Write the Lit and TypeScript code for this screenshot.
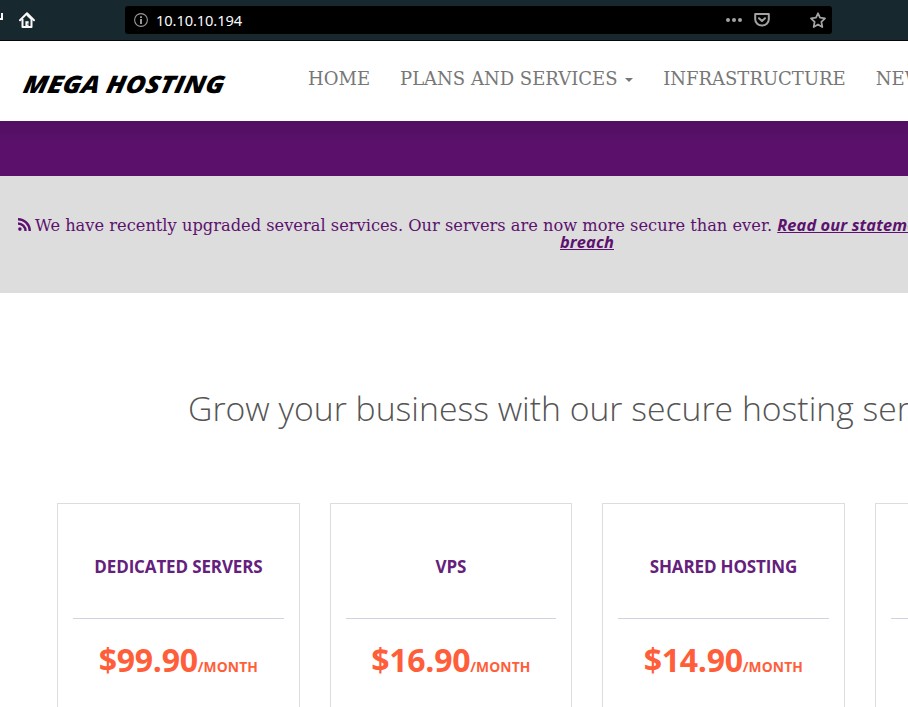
import { LitElement, html, css, svg } from "lit";
import { customElement } from "lit/decorators.js";

interface Plan {
  name: string;
  price: string;
}

const PLANS: Plan[] = [
  { name: "DEDICATED SERVERS", price: "$99.90" },
  { name: "VPS", price: "$16.90" },
  { name: "SHARED HOSTING", price: "$14.90" },
  { name: "", price: "" },
];

const infoIcon = svg`<circle cx="8" cy="8" r="6.4" fill="none" stroke="#999" stroke-width="1.1"/><path d="M7.1 4.2h1.8v1.7H7.1zM7.1 6.9h1.8v5H7.1z" fill="#a8a8a8"/>`;
const homeIcon = svg`<path d="M8 1.3 15 8.3M8 1.3 1 8.3" stroke="#f9f9fa" stroke-width="2" stroke-linecap="round" fill="none"/><path d="M3.5 7v8h9V7L8 2.8" fill="none" stroke="#f9f9fa" stroke-width="2" stroke-linejoin="round"/><path d="M6.4 9.2h3.2V15H6.4z" fill="#f9f9fa"/><path d="M8.5 11.5h1v1.2h-1z" fill="#18282f"/>`;
const pocketIcon = svg`<path d="M1.2 2h13.6v5.2a6.8 6.4 0 0 1-13.6 0z" fill="none" stroke="#a3a3a3" stroke-width="2" stroke-linejoin="round"/><path d="M5 6.2 8 9l3-2.8" fill="none" stroke="#a3a3a3" stroke-width="2" stroke-linecap="round" stroke-linejoin="round"/>`;
const starIcon = svg`<path d="M8 1.3 10 5.7 15 6.3 11.4 9.8 12.3 15 8 12.5 3.7 15 4.6 9.8 1 6.3 6 5.7z" fill="none" stroke="#a3a3a3" stroke-width="1.8" stroke-linejoin="round"/>`;

@customElement("browser-bar")
export class BrowserBar extends LitElement {
  static styles = css`
    :host {
      display: flex;
      align-items: center;
      height: 41px;
      box-sizing: border-box;
      border-bottom: 1px solid #050708;
      background: #18282f;
    }
    .reload { flex: none; width: 4px; height: 40px; }
    .home { flex: none; width: 16px; height: 16px; margin: 0 0 1px 15px; }
    .address {
      display: flex;
      align-items: center;
      box-sizing: border-box;
      width: 707px;
      height: 28px;
      margin-left: 90px;
      padding: 0 6px 0 8px;
      border-radius: 3px;
      background: #000;
    }
    .icon { flex: none; width: 16px; height: 16px; }
    .host {
      flex: 1;
      margin-left: 7px;
      color: #f9f9fa;
      font: 14.67px/28px "Noto Sans", sans-serif;
      letter-spacing: -0.1px;
    }
    .dots { display: flex; gap: 2px; margin-right: 12px; }
    .dot { width: 4px; height: 4px; border-radius: 50%; background: #a3a3a3; }
    .star { margin-left: 40px; }
  `;

  render() {
    return html`
      <svg class="reload" viewBox="0 0 4 40"><path d="M3 13v7H0v-2h1v-5z" fill="#f9f9fa" /></svg>
      <svg class="home" viewBox="0 0 16 16">${homeIcon}</svg>
      <div class="address">
        <svg class="icon" viewBox="0 0 16 16">${infoIcon}</svg>
        <span class="host">10.10.10.194</span>
        <span class="dots"><i class="dot"></i><i class="dot"></i><i class="dot"></i></span>
        <svg class="icon" viewBox="0 0 16 16">${pocketIcon}</svg>
        <svg class="icon star" viewBox="0 0 16 16">${starIcon}</svg>
      </div>
    `;
  }
}

@customElement("plan-card")
export class PlanCard extends LitElement {
  static properties = { plan: { attribute: false } };
  declare plan: Plan;

  static styles = css`
    :host {
      display: block;
      box-sizing: border-box;
      height: 260px;
      padding: 0 15px;
      border: 1px solid #ddd;
      text-align: center;
      font-family: "Open Sans", sans-serif;
      font-weight: 700;
    }
    .name {
      box-sizing: border-box;
      height: 115px;
      border-bottom: 1px solid #d9cfe0;
      color: #64207c;
      font-size: 17px;
      letter-spacing: -0.14px;
      line-height: 126px;
    }
    .price { margin-top: 19px; color: #ff5e3a; font-size: 32px; line-height: 44px; letter-spacing: -0.3px; }
    .per { font-size: 13.8px; letter-spacing: 0.15px; }
  `;

  render() {
    const { name, price } = this.plan;
    return html`
      <div class="name">${name}</div>
      ${price ? html`<div class="price">${price}<span class="per">/MONTH</span></div>` : null}
    `;
  }
}

@customElement("app-root")
export class AppRoot extends LitElement {
  static styles = css`
    :host { display: block; height: 707px; overflow: hidden; background: #fff; }
    .nav {
      display: flex;
      height: 80px;
      padding-left: 23.5px;
      white-space: nowrap;
    }
    .logo {
      width: 284.5px;
      flex: none;
      color: #000;
      font: italic 800 24px/86px "Open Sans", sans-serif;
    }
    .mark { display: inline-block; transform: scaleX(1.115) skewX(-10deg); transform-origin: 0 50%; }
    .links {
      display: flex;
      gap: 30px;
      color: #777;
      font: 18px/76px "DejaVu Serif", serif;
    }
    .caret {
      display: inline-block;
      margin: 0 0 1px 7.6px;
      vertical-align: middle;
      border: 4px solid transparent;
      border-top-color: #777;
      border-bottom: 0;
    }
    .band { height: 55px; background: linear-gradient(#511062, #5b116c 45%, #5b116c); }
    .news {
      box-sizing: border-box;
      width: 1174px;
      height: 117px;
      padding-top: 41px;
      background: #ddd;
      color: #5c126e;
      font: 16.26px/17px "DejaVu Serif", serif;
      white-space: nowrap;
    }
    .line { height: 17px; padding-left: 18px; }
    .rss { width: 13px; height: 13px; margin-right: 4px; vertical-align: 0; }
    .link {
      font-family: "Open Sans", sans-serif;
      font-size: 16.4px;
      font-weight: 700;
      font-style: italic;
      line-height: 10px;
      letter-spacing: 0.1px;
      text-decoration: underline;
    }
    .last { text-align: center; }
    .title {
      width: 1174px;
      box-sizing: border-box;
      margin: 91px 0 0;
      padding-left: 188px;
      color: #555;
      font: 300 33.75px/48px "Open Sans", sans-serif;
      white-space: nowrap;
    }
    .plans {
      display: grid;
      grid-template-columns: repeat(4, 242.5px);
      gap: 30px;
      margin: 71px 0 0 57.2px;
    }
  `;

  render() {
    return html`
      <browser-bar></browser-bar>
      <nav class="nav">
        <div class="logo"><span class="mark">MEGA HOSTING</span></div>
        <div class="links">
          <span>HOME</span>
          <span>PLANS AND SERVICES<i class="caret"></i></span>
          <span>INFRASTRUCTURE</span>
          <span>NEWS</span>
        </div>
      </nav>
      <div class="band"></div>
      <section class="news">
        <div class="line"><svg class="rss" viewBox="0 0 13 13"><circle cx="1.9" cy="11.1" r="1.8" fill="#5c126e" /><path d="M0 5.5a7.5 7.5 0 0 1 7.5 7.5M0 1.2a11.8 11.8 0 0 1 11.8 11.8" fill="none" stroke="#5c126e" stroke-width="2.4" /></svg><span class="text">We have recently upgraded several services. Our servers are now more secure than ever. </span><span class="link">Read our statement on recovering from the data</span></div>
        <div class="last"><span class="link">breach</span></div>
      </section>
      <h2 class="title">Grow your business with our secure hosting services</h2>
      <div class="plans">${PLANS.map((plan) => html`<plan-card .plan=${plan}></plan-card>`)}</div>
    `;
  }
}
